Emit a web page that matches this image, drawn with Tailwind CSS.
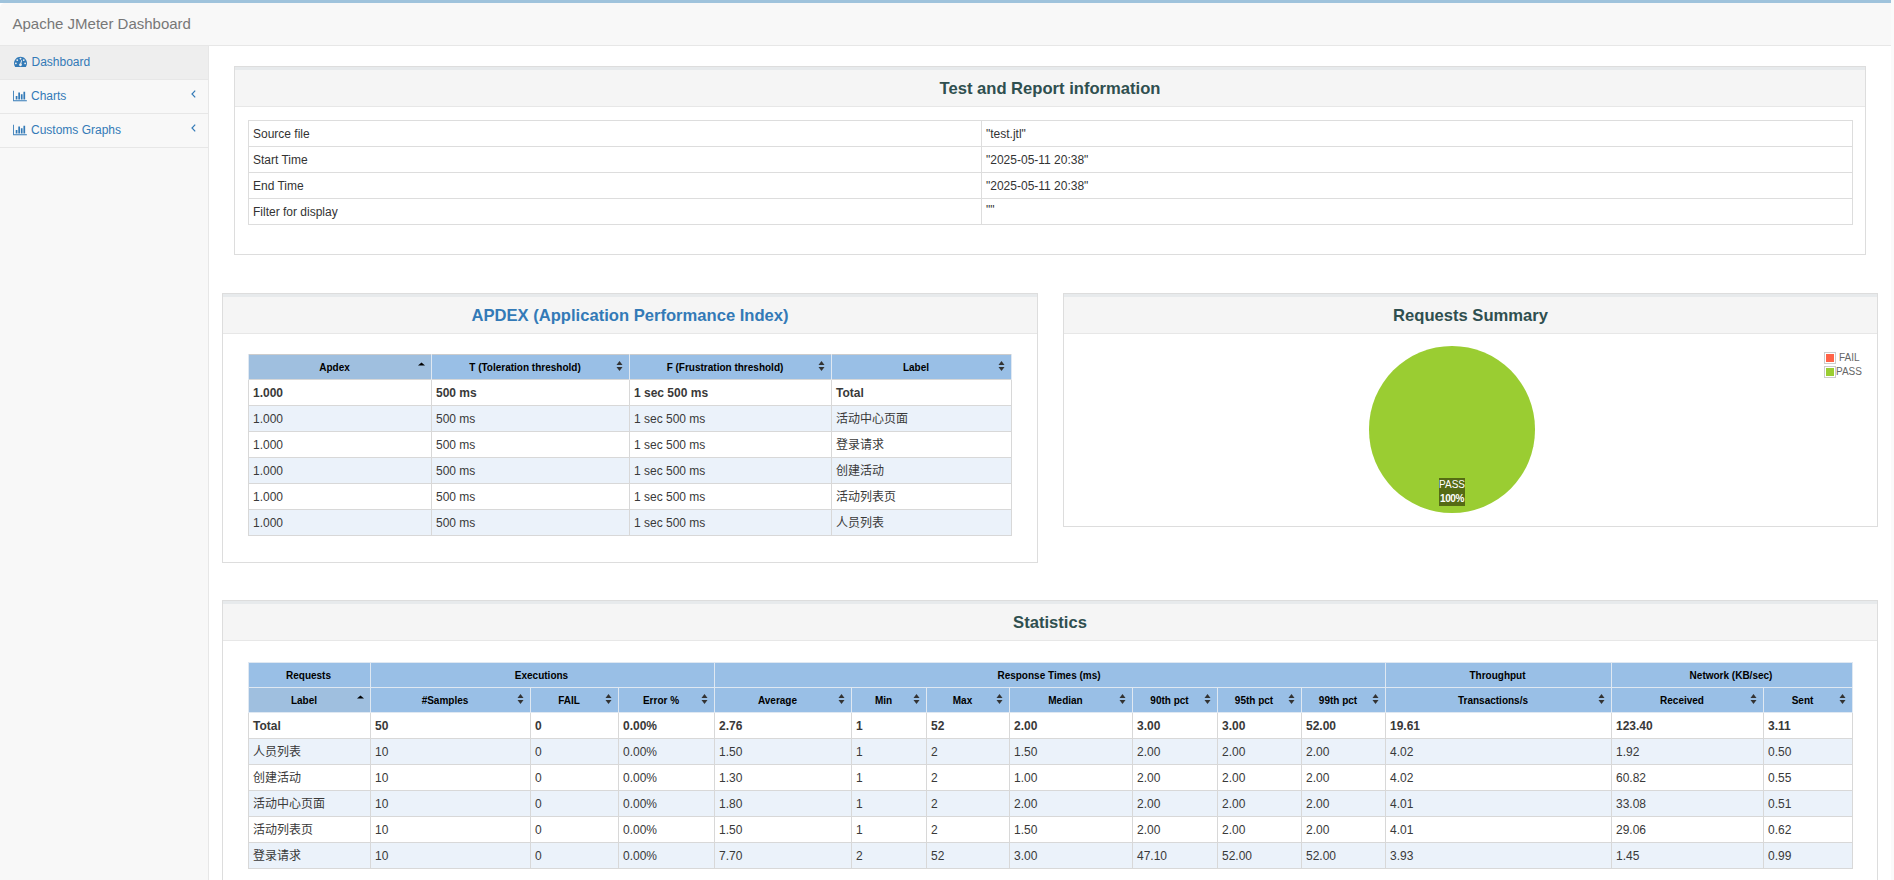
<!DOCTYPE html>
<html>
<head>
<meta charset="utf-8">
<title>Apache JMeter Dashboard</title>
<script src="https://cdn.jsdelivr.net/npm/@tailwindcss/browser@4"></script>
</head>
<body class="h-[880px] w-[1894px] overflow-hidden bg-[#fafafa] font-['Liberation_Sans','Noto_Sans_CJK_SC',sans-serif] text-[12px] text-[#333]">
<div class="w-[1891px] h-[880px] flex flex-col border-t-[3px] border-[#9fc3dc] bg-white overflow-hidden">
  <header class="h-[43px] shrink-0 rounded-tl-[5px] bg-[#f8f8f8] border-b border-[#e7e7e7] pl-[12.5px] pt-[11px] text-[15px] leading-[20px] text-[#777]">Apache JMeter Dashboard</header>
  <div class="flex flex-1 min-h-0">
    <nav class="w-[209px] shrink-0 bg-[#f8f8f8] border-r border-[#e7e7e7] text-[#337ab7]">
      <a class="h-[34px] flex items-center bg-[#eee] border-b border-[#e7e7e7] pl-[14px] pb-[2px] gap-[4.5px]">
        <svg class="w-[13px] h-[13px] fill-current" viewBox="0 0 1792 1792"><path d="M384 1152q0-53-37.5-90.5t-90.5-37.5-90.5 37.5-37.5 90.5 37.5 90.5 90.5 37.5 90.5-37.5 37.5-90.5zm192-448q0-53-37.5-90.5t-90.5-37.5-90.5 37.5-37.5 90.5 37.5 90.5 90.5 37.5 90.5-37.5 37.5-90.5zm428 481l101-382q6-26-7.5-48.5t-38.5-29.5-48 6.5-30 39.5l-101 382q-60 5-107 43.5t-63 98.5q-20 77 20 146t117 89 146-20 89-117q16-60-6-117t-72-91zm660-33q0-53-37.5-90.5t-90.5-37.5-90.5 37.5-37.5 90.5 37.5 90.5 90.5 37.5 90.5-37.5 37.5-90.5zm-640-640q0-53-37.5-90.5t-90.5-37.5-90.5 37.5-37.5 90.5 37.5 90.5 90.5 37.5 90.5-37.5 37.5-90.5zm448 192q0-53-37.5-90.5t-90.5-37.5-90.5 37.5-37.5 90.5 37.5 90.5 90.5 37.5 90.5-37.5 37.5-90.5zm320 448q0 261-141 483-19 29-54 29h-1402q-35 0-54-29-141-221-141-483 0-182 71-348t191-286 286-191 348-71 348 71 286 191 191 286 71 348z"/></svg>
        <span>Dashboard</span>
      </a>
      <a class="h-[34px] flex items-center border-b border-[#e7e7e7] pl-[13px] pb-[2px] gap-[4px] pr-[12px]">
        <svg class="w-[14px] h-[12px] fill-current" viewBox="0 0 2048 1792"><path d="M640 896v512h-256v-512h256zm384-512v1024h-256v-1024h256zm1024 1152v128h-2048v-1536h128v1408h1920zm-640-896v768h-256v-768h256zm384-384v1152h-256v-1152h256z"/></svg>
        <span class="flex-1">Charts</span>
        <svg class="w-[5px] h-[8px] mb-[4px]" viewBox="0 0 5 8" fill="none" stroke="currentColor" stroke-width="1.2"><path d="M4.2 .6 1 4l3.2 3.4"/></svg>
      </a>
      <a class="h-[34px] flex items-center border-b border-[#e7e7e7] pl-[13px] pb-[2px] gap-[4px] pr-[12px]">
        <svg class="w-[14px] h-[12px] fill-current" viewBox="0 0 2048 1792"><path d="M640 896v512h-256v-512h256zm384-512v1024h-256v-1024h256zm1024 1152v128h-2048v-1536h128v1408h1920zm-640-896v768h-256v-768h256zm384-384v1152h-256v-1152h256z"/></svg>
        <span class="flex-1">Customs Graphs</span>
        <svg class="w-[5px] h-[8px] mb-[4px]" viewBox="0 0 5 8" fill="none" stroke="currentColor" stroke-width="1.2"><path d="M4.2 .6 1 4l3.2 3.4"/></svg>
      </a>
    </nav>
    <main class="flex-1 min-w-0 px-[13px] pt-[20px]">
      <section class="mx-[12px] h-[189px] border border-[#ddd] bg-white">
        <h2 class="h-[40px] pt-[3px] border-t-[3px] border-b border-t-[#e7eaec] border-b-[#e7e7e7] bg-[#f5f5f5] flex items-center justify-center text-[16.6px] font-bold text-[#2f4f4f]">Test and Report information</h2>
        <div class="pl-[13px] pt-[13px]">
          <table class="w-[1604px] table-fixed border-collapse border border-[#ddd] [&_td]:border [&_td]:border-[#ddd] [&_td]:h-[26px] [&_td]:px-[4px]">
            <colgroup><col class="w-[733px]"><col class="w-[871px]"></colgroup>
            <tbody>
              <tr><td>Source file</td><td>"test.jtl"</td></tr>
              <tr><td>Start Time</td><td>"2025-05-11 20:38"</td></tr>
              <tr><td>End Time</td><td>"2025-05-11 20:38"</td></tr>
              <tr><td>Filter for display</td><td class="pb-[3px]">""</td></tr>
            </tbody>
          </table>
        </div>
      </section>

      <div class="flex gap-[25px] mt-[38px] items-start">
        <section class="w-[816px] h-[270px] shrink-0 border border-[#ddd] bg-white">
          <h2 class="h-[40px] pt-[3px] border-t-[3px] border-b border-t-[#e7eaec] border-b-[#e7e7e7] bg-[#f5f5f5] flex items-center justify-center text-[16.6px] font-bold text-[#337ab7]">APDEX (Application Performance Index)</h2>
          <div class="pl-[25px] pt-[20px]">
            <table class="w-[763px] table-fixed border-collapse border border-[#ccc] text-[#393939] [&_td]:border [&_td]:border-[#d8d8d8] [&_td]:h-[26px] [&_td]:px-[4px] [&_th]:h-[25px] [&_th]:bg-[#99bfe6] [&_th]:border-x [&_th]:border-x-[#dfe8f2] [&_th]:text-[10px] [&_th]:text-black [&_th]:pl-[4px] [&_th]:pr-[6px] [&_th_span]:pr-[2px] [&_tbody_tr:nth-child(even)]:bg-[#ebf2fa]">
              <colgroup><col class="w-[183px]"><col class="w-[198px]"><col class="w-[202px]"><col class="w-[180px]"></colgroup>
              <thead><tr>
                <th class="!bg-[#9fbfdf]"><div class="flex items-center"><span class="flex-1">Apdex</span><svg class="w-[7px] h-[10px] mb-[2px] fill-black" viewBox="0 0 7 10"><path d="M3.5 1.500 7 4.500H0z"/></svg></div></th>
                <th><div class="flex items-center"><span class="flex-1">T (Toleration threshold)</span><svg class="w-[7px] h-[10px] mb-[2px] fill-[#333]" viewBox="0 0 7 10"><path d="M3.5 0 6.500 4H.5zM3.500 10 .5 6h6z"/></svg></div></th>
                <th><div class="flex items-center"><span class="flex-1">F (Frustration threshold)</span><svg class="w-[7px] h-[10px] mb-[2px] fill-[#333]" viewBox="0 0 7 10"><path d="M3.5 0 6.500 4H.5zM3.500 10 .5 6h6z"/></svg></div></th>
                <th><div class="flex items-center"><span class="flex-1">Label</span><svg class="w-[7px] h-[10px] mb-[2px] fill-[#333]" viewBox="0 0 7 10"><path d="M3.5 0 6.500 4H.5zM3.500 10 .5 6h6z"/></svg></div></th>
              </tr></thead>
              <tbody>
                <tr class="font-bold"><td>1.000</td><td>500 ms</td><td>1 sec 500 ms</td><td>Total</td></tr>
                <tr><td>1.000</td><td>500 ms</td><td>1 sec 500 ms</td><td>活动中心页面</td></tr>
                <tr><td>1.000</td><td>500 ms</td><td>1 sec 500 ms</td><td>登录请求</td></tr>
                <tr><td>1.000</td><td>500 ms</td><td>1 sec 500 ms</td><td>创建活动</td></tr>
                <tr><td>1.000</td><td>500 ms</td><td>1 sec 500 ms</td><td>活动列表页</td></tr>
                <tr><td>1.000</td><td>500 ms</td><td>1 sec 500 ms</td><td>人员列表</td></tr>
              </tbody>
            </table>
          </div>
        </section>
        <section class="relative w-[815px] h-[234px] shrink-0 border border-[#ddd] bg-white">
          <h2 class="h-[40px] pt-[3px] border-t-[3px] border-b border-t-[#e7eaec] border-b-[#e7e7e7] bg-[#f5f5f5] flex items-center justify-center text-[16.6px] font-bold text-[#2f4f4f]">Requests Summary</h2>
          <div class="ml-[305px] mt-[12px] w-[166px] h-[167px] rounded-full bg-[#9acd32] flex flex-col items-center justify-end pb-[7px]">
            <div class="w-[26px] h-[28px] bg-[#556b14] text-white text-[10px] leading-[14px] text-center">PASS<br><span class="font-bold tracking-[-0.4px]">100%</span></div>
          </div>
          <div class="absolute left-[760px] top-[57px] text-[10px] leading-[14px] text-[#666]">
            <div class="flex items-center h-[14px]"><span class="w-[12px] h-[12px] border border-[#ccc] p-[1px]"><span class="block w-full h-full bg-[#ff6347]"></span></span><span class="ml-[3px]">FAIL</span></div>
            <div class="flex items-center h-[14px]"><span class="w-[12px] h-[12px] border border-[#ccc] p-[1px]"><span class="block w-full h-full bg-[#9acd32]"></span></span><span>PASS</span></div>
          </div>
        </section>
      </div>

      <section class="mt-[37px] w-[1656px] h-[300px] border border-[#ddd] bg-white">
        <h2 class="h-[40px] pt-[3px] border-t-[3px] border-b border-t-[#e7eaec] border-b-[#e7e7e7] bg-[#f5f5f5] flex items-center justify-center text-[16.6px] font-bold text-[#2f4f4f]">Statistics</h2>
        <div class="pl-[25px] pt-[21px]">
          <table class="w-[1604px] table-fixed border-collapse border border-[#ccc] text-[#393939] [&_td]:border [&_td]:border-[#d8d8d8] [&_td]:h-[26px] [&_td]:px-[4px] [&_th]:h-[25px] [&_th]:bg-[#99bfe6] [&_th]:border [&_th]:border-[#dfe8f2] [&_th]:text-[10px] [&_th]:text-black [&_th]:pl-[4px] [&_th]:pr-[6px] [&_th_span]:pr-[2px] [&_tbody_tr:nth-child(even)]:bg-[#ebf2fa]">
            <colgroup><col class="w-[122px]"><col class="w-[160px]"><col class="w-[88px]"><col class="w-[96px]"><col class="w-[137px]"><col class="w-[75px]"><col class="w-[83px]"><col class="w-[123px]"><col class="w-[85px]"><col class="w-[84px]"><col class="w-[84px]"><col class="w-[226px]"><col class="w-[152px]"><col class="w-[89px]"></colgroup>
            <thead>
              <tr>
                <th>Requests</th><th colspan="3">Executions</th><th colspan="7">Response Times (ms)</th><th>Throughput</th><th colspan="2">Network (KB/sec)</th>
              </tr>
              <tr>
                <th class="!bg-[#9fbfdf]"><div class="flex items-center"><span class="flex-1">Label</span><svg class="w-[7px] h-[10px] mb-[2px] fill-black" viewBox="0 0 7 10"><path d="M3.5 1.500 7 4.500H0z"/></svg></div></th>
                <th><div class="flex items-center"><span class="flex-1">#Samples</span><svg class="w-[7px] h-[10px] mb-[2px] fill-[#333]" viewBox="0 0 7 10"><path d="M3.5 0 6.500 4H.5zM3.500 10 .5 6h6z"/></svg></div></th>
                <th><div class="flex items-center"><span class="flex-1">FAIL</span><svg class="w-[7px] h-[10px] mb-[2px] fill-[#333]" viewBox="0 0 7 10"><path d="M3.5 0 6.500 4H.5zM3.500 10 .5 6h6z"/></svg></div></th>
                <th><div class="flex items-center"><span class="flex-1">Error %</span><svg class="w-[7px] h-[10px] mb-[2px] fill-[#333]" viewBox="0 0 7 10"><path d="M3.5 0 6.500 4H.5zM3.500 10 .5 6h6z"/></svg></div></th>
                <th><div class="flex items-center"><span class="flex-1">Average</span><svg class="w-[7px] h-[10px] mb-[2px] fill-[#333]" viewBox="0 0 7 10"><path d="M3.5 0 6.500 4H.5zM3.500 10 .5 6h6z"/></svg></div></th>
                <th><div class="flex items-center"><span class="flex-1">Min</span><svg class="w-[7px] h-[10px] mb-[2px] fill-[#333]" viewBox="0 0 7 10"><path d="M3.5 0 6.500 4H.5zM3.500 10 .5 6h6z"/></svg></div></th>
                <th><div class="flex items-center"><span class="flex-1">Max</span><svg class="w-[7px] h-[10px] mb-[2px] fill-[#333]" viewBox="0 0 7 10"><path d="M3.5 0 6.500 4H.5zM3.500 10 .5 6h6z"/></svg></div></th>
                <th><div class="flex items-center"><span class="flex-1">Median</span><svg class="w-[7px] h-[10px] mb-[2px] fill-[#333]" viewBox="0 0 7 10"><path d="M3.5 0 6.500 4H.5zM3.500 10 .5 6h6z"/></svg></div></th>
                <th><div class="flex items-center"><span class="flex-1">90th pct</span><svg class="w-[7px] h-[10px] mb-[2px] fill-[#333]" viewBox="0 0 7 10"><path d="M3.5 0 6.500 4H.5zM3.500 10 .5 6h6z"/></svg></div></th>
                <th><div class="flex items-center"><span class="flex-1">95th pct</span><svg class="w-[7px] h-[10px] mb-[2px] fill-[#333]" viewBox="0 0 7 10"><path d="M3.5 0 6.500 4H.5zM3.500 10 .5 6h6z"/></svg></div></th>
                <th><div class="flex items-center"><span class="flex-1">99th pct</span><svg class="w-[7px] h-[10px] mb-[2px] fill-[#333]" viewBox="0 0 7 10"><path d="M3.5 0 6.500 4H.5zM3.500 10 .5 6h6z"/></svg></div></th>
                <th><div class="flex items-center"><span class="flex-1">Transactions/s</span><svg class="w-[7px] h-[10px] mb-[2px] fill-[#333]" viewBox="0 0 7 10"><path d="M3.5 0 6.500 4H.5zM3.500 10 .5 6h6z"/></svg></div></th>
                <th><div class="flex items-center"><span class="flex-1">Received</span><svg class="w-[7px] h-[10px] mb-[2px] fill-[#333]" viewBox="0 0 7 10"><path d="M3.5 0 6.500 4H.5zM3.500 10 .5 6h6z"/></svg></div></th>
                <th><div class="flex items-center"><span class="flex-1">Sent</span><svg class="w-[7px] h-[10px] mb-[2px] fill-[#333]" viewBox="0 0 7 10"><path d="M3.5 0 6.500 4H.5zM3.500 10 .5 6h6z"/></svg></div></th>
              </tr>
            </thead>
            <tbody>
              <tr class="font-bold"><td>Total</td><td>50</td><td>0</td><td>0.00%</td><td>2.76</td><td>1</td><td>52</td><td>2.00</td><td>3.00</td><td>3.00</td><td>52.00</td><td>19.61</td><td>123.40</td><td>3.11</td></tr>
              <tr><td>人员列表</td><td>10</td><td>0</td><td>0.00%</td><td>1.50</td><td>1</td><td>2</td><td>1.50</td><td>2.00</td><td>2.00</td><td>2.00</td><td>4.02</td><td>1.92</td><td>0.50</td></tr>
              <tr><td>创建活动</td><td>10</td><td>0</td><td>0.00%</td><td>1.30</td><td>1</td><td>2</td><td>1.00</td><td>2.00</td><td>2.00</td><td>2.00</td><td>4.02</td><td>60.82</td><td>0.55</td></tr>
              <tr><td>活动中心页面</td><td>10</td><td>0</td><td>0.00%</td><td>1.80</td><td>1</td><td>2</td><td>2.00</td><td>2.00</td><td>2.00</td><td>2.00</td><td>4.01</td><td>33.08</td><td>0.51</td></tr>
              <tr><td>活动列表页</td><td>10</td><td>0</td><td>0.00%</td><td>1.50</td><td>1</td><td>2</td><td>1.50</td><td>2.00</td><td>2.00</td><td>2.00</td><td>4.01</td><td>29.06</td><td>0.62</td></tr>
              <tr><td>登录请求</td><td>10</td><td>0</td><td>0.00%</td><td>7.70</td><td>2</td><td>52</td><td>3.00</td><td>47.10</td><td>52.00</td><td>52.00</td><td>3.93</td><td>1.45</td><td>0.99</td></tr>
            </tbody>
          </table>
        </div>
      </section>
    </main>
  </div>
</div>
</body>
</html>
